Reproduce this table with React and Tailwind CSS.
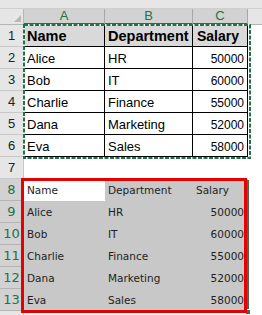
const topRows = [
  ["Name", "Department", "Salary"],
  ["Alice", "HR", "50000"],
  ["Bob", "IT", "60000"],
  ["Charlie", "Finance", "55000"],
  ["Dana", "Marketing", "52000"],
  ["Eva", "Sales", "58000"],
];

const lowRows = topRows;

function RowHead({ n, selected }) {
  return (
    <div
      className={
        selected
          ? "w-[24px] shrink-0 h-full flex items-center justify-center bg-[#d2d2d2] text-[#217346] border-r border-b border-[#b5b5b5] text-[13px]"
          : "w-[24px] shrink-0 h-full flex items-center justify-center bg-[#e6e6e6] text-[#222] border-r border-b border-[#c8c8c8] text-[13px]"
      }
    >
      {n}
    </div>
  );
}

export default function App() {
  return (
    <div className="w-[262px] h-[315px] overflow-hidden bg-white relative font-['Liberation_Sans',Arial,sans-serif]">
      <div className="h-[9px] bg-[#e6e6e6] border-b border-[#cfcfcf]" />

      {/* column headers */}
      <div className="h-[16px] flex text-[13px]">
        <div className="w-[24px] shrink-0 bg-[#e6e6e6] border-r border-b border-[#b5b5b5] relative">
          <div className="absolute right-[2px] bottom-[2px] w-0 h-0 border-l-[7px] border-l-transparent border-b-[7px] border-b-[#b8b8b8]" />
        </div>
        {[
          ["A", "w-[81px]"],
          ["B", "w-[88px]"],
          ["C", "w-[55px]"],
        ].map(([c, w]) => (
          <div
            key={c}
            className={`${w} shrink-0 bg-[#d2d2d2] text-[#217346] border-r border-[#a8a8a8] border-b-2 border-b-[#217346] flex items-center justify-center`}
          >
            {c}
          </div>
        ))}
        <div className="flex-1 bg-[#e6e6e6] border-b border-[#b5b5b5]" />
      </div>

      {/* top table rows 1-6 */}
      {topRows.map((r, i) => (
        <div key={i} className="h-[22px] flex">
          <RowHead n={i + 1} />
          <div
            className={`w-[81px] shrink-0 border-r border-b border-black flex items-center pl-[3px] pt-[2px] ${
              i === 0 ? "bg-[#d9d9d9] font-bold text-[14.5px]" : "text-[13px]"
            }`}
          >
            {r[0]}
          </div>
          <div
            className={`w-[88px] shrink-0 border-r border-b border-black flex items-center pl-[3px] pt-[2px] ${
              i === 0 ? "bg-[#d9d9d9] font-bold text-[14.5px]" : "text-[13px]"
            }`}
          >
            {r[1]}
          </div>
          <div
            className={`w-[55px] shrink-0 border-r border-b border-black flex items-center pt-[2px] ${
              i === 0
                ? "bg-[#d9d9d9] font-bold text-[14px] pl-[4px]"
                : "text-[12px] justify-end pr-[3px]"
            }`}
          >
            {r[2]}
          </div>
          <div className="flex-1" />
        </div>
      ))}

      {/* row 7 */}
      <div className="h-[22px] flex">
        <RowHead n={7} />
        <div className="flex-1" />
      </div>

      {/* lower table rows 8-13 */}
      {lowRows.map((r, i) => (
        <div
          key={i}
          className="h-[22px] flex font-['DejaVu_Sans',sans-serif] text-[10.5px] text-[#1e1e1e]"
        >
          <RowHead n={i + 8} selected />
          <div
            className={`w-[81px] shrink-0 flex items-center pl-[3px] pt-[1px] ${
              i === 0 ? "bg-white" : "bg-[#c8c8c8]"
            }`}
          >
            {r[0]}
          </div>
          <div className="w-[88px] shrink-0 bg-[#c8c8c8] flex items-center pl-[3px] pt-[1px]">
            {r[1]}
          </div>
          <div
            className={`w-[55px] shrink-0 bg-[#c8c8c8] flex items-center pt-[1px] ${
              i === 0 ? "pl-[3px]" : "justify-end pr-[4px]"
            }`}
          >
            {r[2]}
          </div>
          <div className="flex-1" />
        </div>
      ))}

      <div className="h-[22px] flex">
        <RowHead n="" />
        <div className="flex-1" />
      </div>

      {/* copy marquee around A1:C6 */}
      <svg
        className="absolute left-[23px] top-[24px]"
        width="228"
        height="135"
        viewBox="0 0 228 135"
      >
        <rect x="1" y="1" width="226" height="133" fill="none" stroke="#ffffff" strokeWidth="2" />
        <rect
          x="1"
          y="1"
          width="226"
          height="133"
          fill="none"
          stroke="#217346"
          strokeWidth="2"
          strokeDasharray="4 1.5"
        />
      </svg>

      {/* selection edge + fill handle */}
      <div className="absolute left-[246px] top-[180px] w-[3px] h-[131px] bg-[#3f6e55]" />
      <div className="absolute left-[245px] top-[309px] w-[6px] h-[6px] bg-[#3f6e55] border border-white" />

      {/* red highlight border around A8:C13 */}
      <div className="absolute left-[21px] top-[178px] w-[226px] h-[135px] border-[3px] border-[#e60000]" />
    </div>
  );
}
